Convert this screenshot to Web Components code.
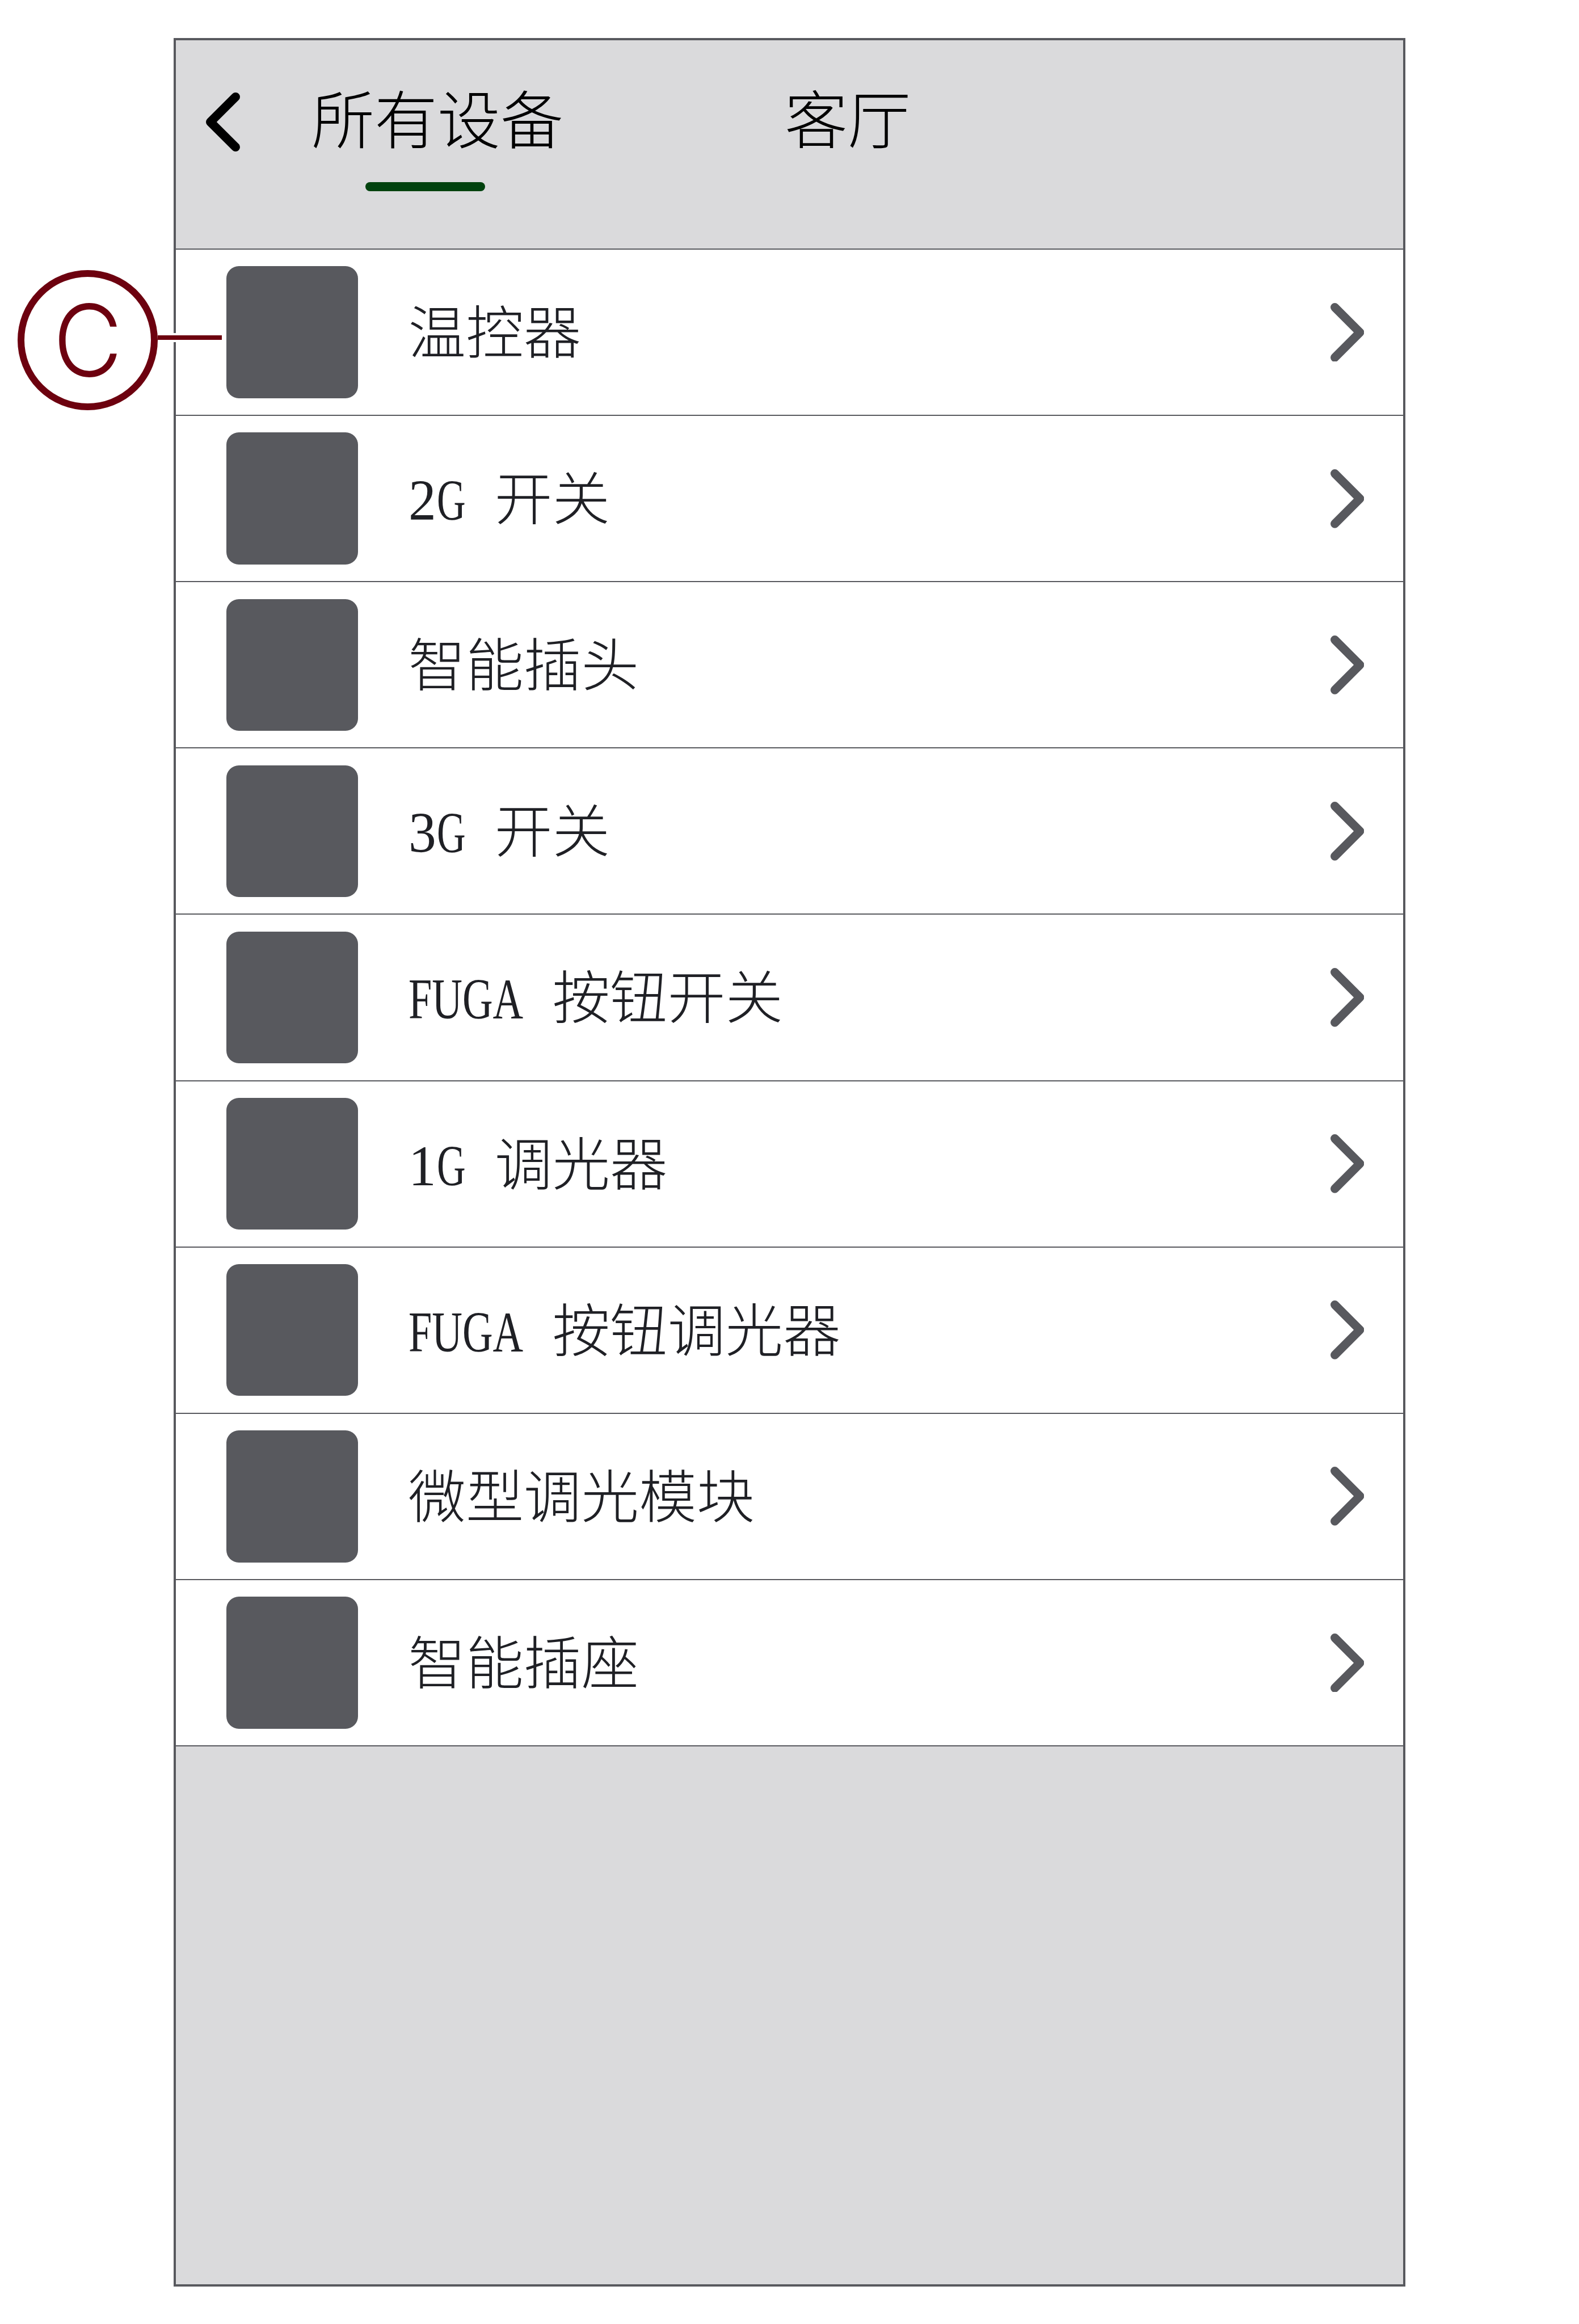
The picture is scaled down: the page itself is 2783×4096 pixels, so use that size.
<!DOCTYPE html>
<html lang="zh-CN">
<head>
<meta charset="UTF-8">
<title>所有设备</title>
<style>
    html, body {
        margin: 0;
        background: #fff;
    }
    body {
        position: relative;
        box-sizing: border-box;
        width: 2783px;
        height: 4096px;
        padding: 67px 0 0 306px;
        overflow: hidden;
        font-family: "Noto Sans CJK SC", "Liberation Serif", sans-serif;
        font-weight: 300;
        color: #1f2025;
    }
</style>
</head>
<body>
<v-screen>
    <v-header slot="header">
        <v-tab active>所有设备</v-tab>
        <v-tab>客厅</v-tab>
    </v-header>
    <v-row>温控器</v-row>
    <v-row><v-half fit="0.96">2</v-half><v-half fit="0.69">G</v-half> 开关</v-row>
    <v-row>智能插头</v-row>
    <v-row><v-half fit="0.96">3</v-half><v-half fit="0.69">G</v-half> 开关</v-row>
    <v-row><v-half fit="0.73">FUGA</v-half> 按钮开关</v-row>
    <v-row><v-half fit="0.96">1</v-half><v-half fit="0.69">G</v-half> 调光器</v-row>
    <v-row><v-half fit="0.73">FUGA</v-half> 按钮调光器</v-row>
    <v-row>微型调光模块</v-row>
    <v-row>智能插座</v-row>
</v-screen>
<v-callout>C</v-callout>

<script>
function attach(elem, html) {
    const shadowRoot = elem.attachShadow({ mode: 'open' })
    shadowRoot.innerHTML = html
    return shadowRoot
}

class VScreen extends HTMLElement {
    constructor() {
        super()
        attach(this, `
        <style>
            :host {
                display: flex;
                flex-direction: column;
                box-sizing: border-box;
                width: 2171px;
                height: 3963px;
                border: 4px solid #58595e;
                background: #dadadc;
            }
        </style>
        <slot name="header"></slot>
        <slot></slot>
        `)
    }
}

class VHeader extends HTMLElement {
    constructor() {
        super()
        attach(this, `
        <style>
            :host {
                display: flex;
                align-items: flex-start;
                box-sizing: border-box;
                height: 369px;
                padding-left: 53px;
                border-bottom: 2px solid #58595e;
                font-size: 111px;
                color: #000;
            }
            svg {
                display: block;
                width: 60px;
                height: 104px;
                margin: 92px 126px 0 0;
            }
            .tabs {
                display: flex;
                gap: 390px;
                padding-top: 62px;
            }
        </style>
        <svg viewBox="0 0 60 104" fill="none" stroke="currentColor" stroke-width="15.6"
            stroke-linecap="round" stroke-linejoin="round"><path d="M52.2 7.8 7.8 52l44.4 44.2"/></svg>
        <div class="tabs"><slot></slot></div>
        `)
    }
}

class VTab extends HTMLElement {
    constructor() {
        super()
        attach(this, `
        <style>
            :host {
                display: block;
                line-height: 144px;
                white-space: nowrap;
            }
            .bar {
                display: none;
                width: 211px;
                height: 16px;
                margin: 44px 0 0 94.5px;
                border-radius: 8px;
                background: #00420e;
            }
            :host([active]) .bar {
                display: block;
            }
        </style>
        <slot></slot>
        <div class="bar"></div>
        `)
    }
}

class VRow extends HTMLElement {
    constructor() {
        super()
        attach(this, `
        <style>
            :host {
                display: flex;
                align-items: center;
                box-sizing: border-box;
                height: 293.11px;
                padding: 0 68.6px 0 88.5px;
                border-bottom: 2px solid #58595e;
                background: #fff;
                font-size: 101.7px;
                line-height: 1.2;
            }
            .thumb {
                flex: none;
                width: 232.5px;
                height: 232.5px;
                border-radius: 22px;
                background: #58595e;
            }
            .label {
                flex: 1;
                margin-left: 88.5px;
                padding-bottom: 13px;
                white-space: nowrap;
                word-spacing: 0.276em;
            }
            svg {
                flex: none;
                width: 59.4px;
                height: 103.7px;
                color: #58595e;
            }
        </style>
        <div class="thumb"></div>
        <div class="label"><slot></slot></div>
        <svg viewBox="0 0 59.4 103.7" fill="none" stroke="currentColor" stroke-width="15.2"
            stroke-linecap="round" stroke-linejoin="round"><path d="M7.6 7.6 51.8 51.85 7.6 96.1"/></svg>
        `)
    }
}

// latin run squeezed so that each character takes half an em
class VHalf extends HTMLElement {
    constructor() {
        super()
        attach(this, `
        <style>
            :host {
                display: inline-block;
                font-family: "Liberation Serif", serif;
                font-weight: 400;
                font-kerning: none;
                line-height: 1;
            }
            span {
                display: inline-block;
                transform-origin: 0 50%;
            }
        </style>
        <span><slot></slot></span>
        `)
    }
    connectedCallback() {
        const fit = this.getAttribute('fit') || 1
        this.style.width = this.textContent.length * 0.5 + 'em'
        this.shadowRoot.querySelector('span').style.transform = `scaleX(${fit})`
    }
}

class VCallout extends HTMLElement {
    constructor() {
        super()
        attach(this, `
        <style>
            :host {
                position: absolute;
                left: 31px;
                top: 475.5px;
                display: flex;
                align-items: center;
                color: #6d010f;
            }
            .ring {
                display: flex;
                align-items: center;
                justify-content: center;
                box-sizing: border-box;
                width: 247px;
                height: 247px;
                border: 12px solid currentColor;
                border-radius: 50%;
                font: 300 175px/1 Inter, "Liberation Sans", sans-serif;
            }
            .ring span {
                transform: scaleX(0.96);
            }
            /* the white edges cut the frame line where the pointer crosses it */
            .line {
                width: 113px;
                height: 8px;
                margin-top: -8px;
                border: solid #fff;
                border-width: 4px 0;
                background: currentColor;
                background-clip: padding-box;
            }
        </style>
        <div class="ring"><span><slot></slot></span></div>
        <div class="line"></div>
        `)
    }
}

customElements.define('v-screen', VScreen)
customElements.define('v-header', VHeader)
customElements.define('v-tab', VTab)
customElements.define('v-row', VRow)
customElements.define('v-half', VHalf)
customElements.define('v-callout', VCallout)
</script>
</body>
</html>
